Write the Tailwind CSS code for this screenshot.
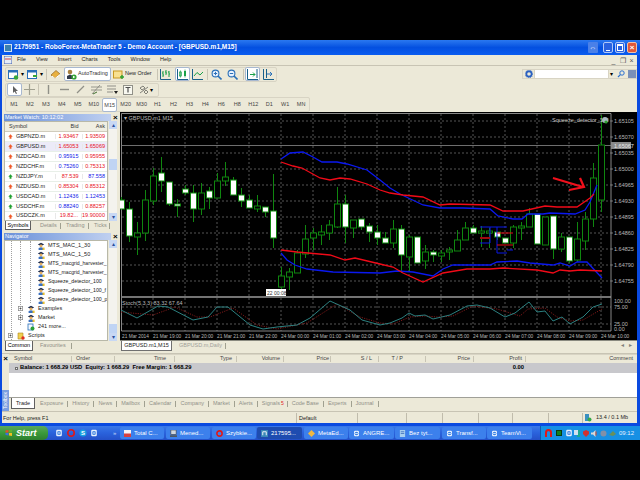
<!DOCTYPE html>
<html lang="en">
<head>
<meta charset="UTF-8">
<title>2175951 - RoboForex-MetaTrader 5</title>
<script src="https://cdn.jsdelivr.net/npm/@tailwindcss/browser@4"></script>
</head>
<body class="bg-black">
<svg class="hidden">
  <symbol id="ea" viewBox="0 0 10 10"><path d="M1 3 5 1l4 2-4 2z" fill="#1c2c50"/><circle cx="5" cy="5" r="1.8" fill="#e8b060"/><path d="M2 10V7.5L5 6.5l3 1V10z" fill="#3a70c0"/><path d="M7 7h2.5v3H7z" fill="#e8c030"/></symbol>
  <symbol id="up" viewBox="0 0 8 8"><path d="M4 .5 7.5 4.2H5.5V7.5h-3V4.2H.5z" fill="currentColor"/></symbol>
  <symbol id="tree-plus" viewBox="0 0 7 7"><rect x=".5" y=".5" width="6" height="6" fill="#fff" stroke="#8a8a8a"/><path d="M2 3.5h3M3.5 2v3" stroke="#222" stroke-width=".8"/></symbol>
  <symbol id="ie" viewBox="0 0 10 10"><rect x="1.5" y="1" width="7" height="8" rx="1.5" fill="#e8f2ff"/><circle cx="5" cy="5" r="2.6" fill="#3a80e0"/><path d="M3 5h4" stroke="#fff"/></symbol>
</svg>

<div class="w-[640px] h-[480px] overflow-hidden bg-black font-['Liberation_Sans',sans-serif] text-[5.5px] leading-none text-[#222] whitespace-nowrap flex flex-col">
  <div class="h-[40px] shrink-0"></div>

  <!-- window -->
  <div class="h-[386px] shrink-0 flex flex-col pl-[2px] pr-[3px] pb-[3px] bg-[#0a4ae0]">
    <!-- title bar -->
    <div class="h-[15px] shrink-0 -ml-[2px] -mr-[3px] flex items-center bg-gradient-to-b from-[#2a78f0] via-[#0450e0] to-[#0a5cf0] text-white">
      <div class="w-[8px] h-[8px] ml-[4px] mr-[1px] bg-[#3a80b0] border border-[#d0e0f0]"></div>
      <span class="text-[6.5px] font-bold ml-[1px]">2175951 - RoboForex-MetaTrader 5 - Demo Account - [GBPUSD.m1,M15]</span>
      <div class="ml-auto flex items-center mr-[3px]">
        <div class="w-[10px] h-[11px] bg-[#4a80e8] text-center text-[7px] leading-[11px] rounded-[1px]">⇔</div>
        <div class="w-[10px] h-[11px] ml-[5px] bg-[#2a62e0] border border-[#b0c8f8] rounded-[2px] flex items-end justify-center pb-[1px]"><div class="w-[4px] h-[1px] bg-white"></div></div>
        <div class="w-[10px] h-[11px] ml-[2px] bg-[#2a62e0] border border-[#b0c8f8] rounded-[2px] p-[1px]"><div class="w-full h-full border border-white border-t-2"></div></div>
        <div class="w-[10px] h-[11px] ml-[2px] bg-[#e0583a] border border-[#f0c0a8] rounded-[2px] text-white text-[8px] leading-[9px] text-center font-bold">×</div>
      </div>
    </div>

    <!-- menu -->
    <div class="h-[11px] shrink-0 flex items-center bg-[#ece9d8] border-b border-[#c8c4b4] text-[#222]">
      <svg class="w-[8px] h-[8px] ml-[2px]" viewBox="0 0 8 8"><rect width="8" height="8" fill="#e8eef8" stroke="#4060b0"/><path d="M1 3h6" stroke="#d04040"/></svg>
      <span class="ml-[5px]">File</span><span class="ml-[10px]">View</span><span class="ml-[10px]">Insert</span><span class="ml-[10px]">Charts</span><span class="ml-[10px]">Tools</span><span class="ml-[10px]">Window</span><span class="ml-[10px]">Help</span>
      <div class="ml-auto flex text-[#555] text-[7px] mr-[1px]"><span class="w-[9px] text-center">_</span><span class="w-[9px] text-center">❐</span><span class="w-[9px] text-center">×</span></div>
    </div>

    <!-- toolbar row 1 -->
    <div class="h-[16px] shrink-0 flex items-center bg-[#ece9d8] pl-[3px]">
      <div class="h-[15px] w-[272px] flex items-center border border-[#d8d4c4] rounded-[2px]">
        <svg class="w-[11px] h-[11px] ml-[2px] shrink-0" viewBox="0 0 11 11"><rect x=".5" y="1.5" width="9" height="8" fill="#fff" stroke="#2a70b8"/><path d="M.5 1.5h9v2h-9z" fill="#2a70b8"/><circle cx="8" cy="8.5" r="2.2" fill="#38a838"/></svg>
        <span class="ml-[1px] w-[5px] text-[6px] text-black text-center">▾</span>
        <svg class="w-[11px] h-[11px] ml-[2px] shrink-0" viewBox="0 0 11 11"><rect x=".5" y="1.5" width="9" height="8" fill="#fff" stroke="#2a70b8"/><path d="M.5 1.5h9v2h-9z" fill="#2a70b8"/><path d="M6 7h4" stroke="#38a838" stroke-width="2"/></svg>
        <span class="ml-[1px] w-[5px] text-[6px] text-black text-center">▾</span>
        <div class="w-px h-[11px] bg-[#c8c4b4] ml-[2px]"></div>
        <svg class="w-[11px] h-[11px] ml-[3px] shrink-0" viewBox="0 0 11 11"><path d="M1 6 6 1.5l4 3.5-5 4.5z" fill="#e8b040" stroke="#906020" stroke-width=".7"/><path d="M2 7l3 2.5 5-4" stroke="#fff" fill="none"/></svg>
        <div class="ml-[3px] w-[47px] h-[14px] shrink-0 flex items-center bg-white border border-[#a8b8d0] rounded-[2px]">
          <svg class="w-[11px] h-[11px] ml-[1px] shrink-0" viewBox="0 0 11 11"><circle cx="4" cy="3" r="2.3" fill="#a88040"/><path d="M1 10V7l3-1.5L7 7v3z" fill="#30384a"/><circle cx="8" cy="8" r="2.6" fill="#30a030"/><path d="M7 6.8 9.4 8 7 9.2z" fill="#fff"/></svg>
          <span class="ml-[1px] text-[#333]">AutoTrading</span>
        </div>
        <svg class="w-[11px] h-[11px] ml-[2px] shrink-0" viewBox="0 0 11 11"><rect x=".5" y="2" width="8.5" height="7" fill="#f8e090" stroke="#c89820"/><path d="M7 8h4M9 6v4" stroke="#30a030" stroke-width="1.4"/></svg>
        <span class="ml-[1px] w-[27px] text-[#222]">New Order</span>
        <div class="w-px h-[11px] bg-[#c8c4b4] ml-[5px]"></div>
        <svg class="w-[11px] h-[11px] ml-[2px] shrink-0" viewBox="0 0 11 11"><path d="M.5 0v10.5H11" stroke="#18608a" fill="none"/><path d="M3 2v6M3 4H2M3 6h1M6 1v5M6 3H5M6 4h1M9 2v6M9 3H8M9 5h1" stroke="#18a048"/></svg>
        <div class="w-[15px] h-[14px] ml-[4px] shrink-0 bg-white border border-[#a8b8d0] rounded-[2px] flex items-center justify-center">
          <svg class="w-[11px] h-[11px]" viewBox="0 0 11 11"><path d="M.5 0v10.5H11" stroke="#18608a" fill="none"/><rect x="2.5" y="3" width="2" height="4" fill="#fff" stroke="#18a048" stroke-width=".7"/><rect x="7" y="2" width="2" height="5" fill="#18a048"/><path d="M3.5 1.5v7M8 .5v8" stroke="#18a048" stroke-width=".7"/></svg>
        </div>
        <svg class="w-[11px] h-[11px] ml-[2px] shrink-0" viewBox="0 0 11 11"><path d="M.5 0v10.5H11" stroke="#18608a" fill="none"/><path d="M2 7 5 3.5 8 6l3-3" stroke="#18a048" fill="none"/></svg>
        <div class="w-px h-[11px] bg-[#c8c4b4] ml-[4px]"></div>
        <svg class="w-[11px] h-[11px] ml-[3px] shrink-0" viewBox="0 0 11 11"><circle cx="4.5" cy="4.5" r="3.4" fill="#e8f2ff" stroke="#2a70b8" stroke-width="1.1"/><path d="M7 7l3.5 3.5" stroke="#2a70b8" stroke-width="1.6"/><path d="M2.8 4.5h3.4M4.5 2.8v3.4" stroke="#2a70b8"/></svg>
        <svg class="w-[11px] h-[11px] ml-[5px] shrink-0" viewBox="0 0 11 11"><circle cx="4.5" cy="4.5" r="3.4" fill="#e8f2ff" stroke="#2a70b8" stroke-width="1.1"/><path d="M7 7l3.5 3.5" stroke="#2a70b8" stroke-width="1.6"/><path d="M2.8 4.5h3.4" stroke="#2a70b8"/></svg>
        <div class="w-px h-[11px] bg-[#c8c4b4] ml-[5px]"></div>
        <div class="w-[15px] h-[14px] ml-[1px] shrink-0 bg-white border border-[#a8b8d0] rounded-[2px] flex items-center justify-center">
          <svg class="w-[11px] h-[11px]" viewBox="0 0 11 11"><path d="M.5 0v10.5H11M10 0v9" stroke="#18608a" fill="none"/><path d="M3 5.5h5M6 3.5l2 2-2 2" stroke="#18a048" fill="none"/></svg>
        </div>
        <svg class="w-[11px] h-[11px] ml-[3px] shrink-0" viewBox="0 0 11 11"><path d="M.5 0v10.5H11M3.5 0v9" stroke="#18608a" fill="none"/><path d="M4 5h5M7 3l2 2-2 2" stroke="#2a70b8" fill="none"/></svg>
      </div>
      <!-- search -->
      <div class="ml-auto h-[10px] w-[115px] flex items-center border border-[#d8d4c4] mt-[-1px]">
        <svg class="w-[8px] h-[8px] ml-[2px] shrink-0" viewBox="0 0 8 8"><circle cx="4" cy="4" r="2.6" fill="none" stroke="#2a60c0" stroke-width="1.6"/><circle cx="4" cy="4" r="3.8" fill="none" stroke="#2a60c0" stroke-dasharray="1 1"/></svg>
        <div class="w-[75px] h-full bg-white ml-[1px] border-x border-[#d8d4c4]"></div>
        <span class="ml-[1px] text-[6px] text-black w-[6px]">▾</span>
        <svg class="w-[8px] h-[8px] ml-[1px] shrink-0" viewBox="0 0 8 8"><circle cx="5" cy="3" r="2.2" fill="none" stroke="#2a70d0"/><path d="M3.4 4.6 1 7" stroke="#2a70d0" stroke-width="1.2"/></svg>
        <div class="w-[8px] h-[8px] ml-[3px] bg-[#7a90b8]"></div>
      </div>
    </div>

    <!-- toolbar row 2 -->
    <div class="h-[15px] shrink-0 flex items-center bg-[#ece9d8] pl-[3px]">
      <div class="h-[14px] w-[154px] flex items-center border border-[#d8d4c4] rounded-[2px]">
        <div class="w-[15px] h-[13px] ml-[1px] shrink-0 bg-white border border-[#a8b8d0] rounded-[2px] flex items-center justify-center">
          <svg class="w-[8px] h-[8px]" viewBox="0 0 8 8"><path d="M2 0v7l1.6-1.6L5 8l1-.6-1.3-2.4H7z" fill="#606060"/></svg>
        </div>
        <svg class="w-[11px] h-[11px] ml-[2px] shrink-0" viewBox="0 0 11 11"><path d="M5.5 0v11M0 5.5h11" stroke="#a0a090" stroke-width="1.2"/></svg>
        <div class="w-px h-[11px] bg-[#c8c4b4] ml-[3px]"></div>
        <svg class="w-[9px] h-[9px] ml-[5px] shrink-0" viewBox="0 0 9 9"><path d="M4.5 0v9" stroke="#909088" stroke-width="1.4"/></svg>
        <svg class="w-[9px] h-[9px] ml-[7px] shrink-0" viewBox="0 0 9 9"><path d="M0 4.5h9" stroke="#909088" stroke-width="1.4"/></svg>
        <svg class="w-[9px] h-[9px] ml-[7px] shrink-0" viewBox="0 0 9 9"><path d="M1 8 8 1" stroke="#909088" stroke-width="1.2"/></svg>
        <svg class="w-[11px] h-[11px] ml-[6px] shrink-0" viewBox="0 0 11 11"><path d="M1 10 9 1M0 3h11M0 6h11" stroke="#808078" stroke-width=".8"/><path d="M2 10 6 8" stroke="#407030"/></svg>
        <svg class="w-[11px] h-[11px] ml-[5px] shrink-0" viewBox="0 0 11 11"><path d="M0 2h9M0 5h9M0 8h6" stroke="#909088" stroke-width="1.2"/><path d="M7 7h4l-2 3z" fill="#222"/></svg>
        <svg class="w-[10px] h-[10px] ml-[5px] shrink-0" viewBox="0 0 10 10"><rect x=".5" y=".5" width="9" height="9" fill="#f8f8f0" stroke="#909088"/><path d="M2.5 2.5h5M5 2.5v5" stroke="#505050" stroke-width="1.2"/></svg>
        <svg class="w-[10px] h-[10px] ml-[6px] shrink-0" viewBox="0 0 10 10"><path d="M1 3 4 1l2 2-3 2zM5 7l2-2 2 2-2 2zM1 8 9 2" stroke="#808078" fill="none"/></svg>
        <span class="ml-[1px] text-[6px] text-black">▾</span>
      </div>
    </div>

    <!-- toolbar row 3, periods -->
    <div class="h-[15px] shrink-0 flex items-center bg-[#ece9d8] pl-[3px]">
      <div class="h-[15px] w-[305px] flex items-center border border-[#d8d4c4] rounded-[2px] text-[#444] text-center">
        <span class="w-[16px]">M1</span><span class="w-[16px]">M2</span><span class="w-[16px]">M3</span><span class="w-[16px]">M4</span><span class="w-[16px]">M5</span><span class="w-[16px]">M10</span>
        <span class="w-[15px] h-[14px] mx-[.5px] bg-white border border-[#a8b8d0] rounded-[2px] leading-[12px]">M15</span>
        <span class="w-[16px]">M20</span><span class="w-[16px]">M30</span><span class="w-[16px]">H1</span><span class="w-[16px]">H2</span><span class="w-[16px]">H3</span><span class="w-[16px]">H4</span><span class="w-[16px]">H6</span><span class="w-[16px]">H8</span><span class="w-[16px]">H12</span><span class="w-[16px]">D1</span><span class="w-[16px]">W1</span><span class="w-[16px]">MN</span>
      </div>
    </div>

    <!-- middle -->
    <div class="h-[241px] shrink-0 flex bg-[#ece9d8]">
      <!-- left column -->
      <div class="w-[116px] shrink-0 flex flex-col">
        <!-- market watch -->
        <div class="h-[119px] flex flex-col pt-[2px]">
          <div class="h-[7px] shrink-0 flex items-center">
            <div class="ml-[2px] w-[107px] h-full bg-gradient-to-r from-[#6a90d8] to-[#c0d0f0] text-white pl-[1px] leading-[7px]">Market Watch: 10:12:02</div>
            <span class="ml-[2px] text-[8px] text-black font-bold">×</span>
          </div>
          <div class="flex ml-[2px] h-[100px]">
            <div class="w-[104px] bg-white border border-[#b8b8a8] text-right">
              <div class="h-[10px] flex items-center bg-[#f0eee2] text-[#333] border-b border-[#d0ccbc]">
                <span class="w-[51px] text-left pl-[4px]">Symbol</span><span class="w-[27px] pr-[3px]">Bid</span><span class="w-[26px] pr-[2px]">Ask</span>
              </div>
              <div class="h-[10px] flex items-center border-b border-[#e8efe8]"><span class="w-[51px] flex items-center text-left pl-[3px]"><svg class="w-[5px] h-[5px] shrink-0 text-[#f05a28]"><use href="#up"/></svg><span class="ml-[3px]">GBPNZD.m</span></span><span class="w-[27px] pr-[3px] text-[#e8101c] border-l border-[#e8e8e8]">1.93467</span><span class="w-[26px] pr-[2px] text-[#e8101c] border-l border-[#e8e8e8]">1.93509</span></div>
              <div class="h-[10px] flex items-center border-b border-[#e8efe8] bg-[#ecebf8]"><span class="w-[51px] flex items-center text-left pl-[3px]"><svg class="w-[5px] h-[5px] shrink-0 text-[#f05a28]"><use href="#up"/></svg><span class="ml-[3px]">GBPUSD.m</span></span><span class="w-[27px] pr-[3px] text-[#e8101c] border-l border-[#e8e8e8]">1.65053</span><span class="w-[26px] pr-[2px] text-[#e8101c] border-l border-[#e8e8e8]">1.65069</span></div>
              <div class="h-[10px] flex items-center border-b border-[#e8efe8]"><span class="w-[51px] flex items-center text-left pl-[3px]"><svg class="w-[5px] h-[5px] shrink-0 text-[#f05a28]"><use href="#up"/></svg><span class="ml-[3px]">NZDCAD.m</span></span><span class="w-[27px] pr-[3px] text-[#1020e8] border-l border-[#e8e8e8]">0.95915</span><span class="w-[26px] pr-[2px] text-[#e8101c] border-l border-[#e8e8e8]">0.95955</span></div>
              <div class="h-[10px] flex items-center border-b border-[#e8efe8]"><span class="w-[51px] flex items-center text-left pl-[3px]"><svg class="w-[5px] h-[5px] shrink-0 text-[#f05a28]"><use href="#up"/></svg><span class="ml-[3px]">NZDCHF.m</span></span><span class="w-[27px] pr-[3px] text-[#1020e8] border-l border-[#e8e8e8]">0.75260</span><span class="w-[26px] pr-[2px] text-[#e8101c] border-l border-[#e8e8e8]">0.75313</span></div>
              <div class="h-[10px] flex items-center border-b border-[#e8efe8]"><span class="w-[51px] flex items-center text-left pl-[3px]"><svg class="w-[5px] h-[5px] shrink-0 text-[#20a030]"><use href="#up"/></svg><span class="ml-[3px]">NZDJPY.m</span></span><span class="w-[27px] pr-[3px] text-[#e8101c] border-l border-[#e8e8e8]">87.539</span><span class="w-[26px] pr-[2px] text-[#1020e8] border-l border-[#e8e8e8]">87.558</span></div>
              <div class="h-[10px] flex items-center border-b border-[#e8efe8]"><span class="w-[51px] flex items-center text-left pl-[3px]"><svg class="w-[5px] h-[5px] shrink-0 text-[#f05a28]"><use href="#up"/></svg><span class="ml-[3px]">NZDUSD.m</span></span><span class="w-[27px] pr-[3px] text-[#e8101c] border-l border-[#e8e8e8]">0.85304</span><span class="w-[26px] pr-[2px] text-[#e8101c] border-l border-[#e8e8e8]">0.85312</span></div>
              <div class="h-[10px] flex items-center border-b border-[#e8efe8]"><span class="w-[51px] flex items-center text-left pl-[3px]"><svg class="w-[5px] h-[5px] shrink-0 text-[#20a030]"><use href="#up"/></svg><span class="ml-[3px]">USDCAD.m</span></span><span class="w-[27px] pr-[3px] text-[#1020e8] border-l border-[#e8e8e8]">1.12436</span><span class="w-[26px] pr-[2px] text-[#1020e8] border-l border-[#e8e8e8]">1.12453</span></div>
              <div class="h-[10px] flex items-center border-b border-[#e8efe8]"><span class="w-[51px] flex items-center text-left pl-[3px]"><svg class="w-[5px] h-[5px] shrink-0 text-[#20a030]"><use href="#up"/></svg><span class="ml-[3px]">USDCHF.m</span></span><span class="w-[27px] pr-[3px] text-[#1020e8] border-l border-[#e8e8e8]">0.88240</span><span class="w-[26px] pr-[2px] text-[#e8101c] border-l border-[#e8e8e8]">0.88257</span></div>
              <div class="h-[8px] flex items-center overflow-hidden"><span class="w-[51px] flex items-center text-left pl-[3px]"><svg class="w-[5px] h-[5px] shrink-0 text-[#f05a28]"><use href="#up"/></svg><span class="ml-[3px]">USDCZK.m</span></span><span class="w-[27px] pr-[3px] text-[#e8101c] border-l border-[#e8e8e8]">19.82...</span><span class="w-[26px] pr-[2px] text-[#e8101c] border-l border-[#e8e8e8]">19.90000</span></div>
            </div>
            <!-- scrollbar -->
            <div class="w-[8px] ml-[1px] bg-[#f4f3ee] flex flex-col items-center">
              <div class="w-[8px] h-[8px] bg-[#c8d8f4] text-[#2a50a0] text-[6px] leading-[8px] text-center">▴</div>
              <div class="w-[8px] h-[11px] mt-[30px] bg-[#c0d4f4]"></div>
              <div class="w-[8px] h-[8px] mt-auto bg-[#c8d8f4] text-[#2a50a0] text-[6px] leading-[8px] text-center">▾</div>
            </div>
          </div>
          <!-- tabs -->
          <div class="h-[9px] flex items-center ml-[3px] text-[#909088]">
            <span class="w-[26px] h-[9px] bg-white border-x border-b border-[#606060] text-black text-center leading-[8px]">Symbols</span>
            <span class="ml-[9px] w-[20px]">Details</span><span class="w-px h-[6px] bg-[#a0a090]"></span>
            <span class="ml-[5px] w-[22px]">Trading</span><span class="w-px h-[6px] bg-[#a0a090]"></span>
            <span class="ml-[5px] w-[15px]">Ticks</span><span class="w-px h-[6px] bg-[#a0a090]"></span>
          </div>
        </div>

        <!-- navigator -->
        <div class="h-[122px] flex flex-col pt-[2px]">
          <div class="h-[7px] shrink-0 flex items-center">
            <div class="ml-[2px] w-[107px] h-full bg-gradient-to-r from-[#6a90d8] to-[#c0d0f0] text-white pl-[1px] leading-[7px]">Navigator</div>
            <span class="ml-[2px] text-[8px] text-black font-bold">×</span>
          </div>
          <div class="flex ml-[2px] h-[101px]">
            <div class="relative w-[104px] bg-white border border-[#b8b8a8] text-[#222] overflow-hidden">
              <div class="absolute left-[6px] top-0 h-full border-l border-dotted border-[#a0a0a0]"></div>
              <div class="absolute left-[15px] top-0 h-[84px] border-l border-dotted border-[#a0a0a0]"></div>
              <div class="absolute left-[25px] top-0 h-[62px] border-l border-dotted border-[#a0a0a0]"></div>
              <div class="h-[9px] flex items-center pl-[32px]"><svg class="w-[8px] h-[8px] shrink-0"><use href="#ea"/></svg><span class="ml-[3px]">MTS_MAC_1_30</span></div>
              <div class="h-[9px] flex items-center pl-[32px]"><svg class="w-[8px] h-[8px] shrink-0"><use href="#ea"/></svg><span class="ml-[3px]">MTS_MAC_1_50</span></div>
              <div class="h-[9px] flex items-center pl-[32px]"><svg class="w-[8px] h-[8px] shrink-0"><use href="#ea"/></svg><span class="ml-[3px] text-[5.1px]">MTS_macgrid_harvester_</span></div>
              <div class="h-[9px] flex items-center pl-[32px]"><svg class="w-[8px] h-[8px] shrink-0"><use href="#ea"/></svg><span class="ml-[3px] text-[5.1px]">MTS_macgrid_harvester_</span></div>
              <div class="h-[9px] flex items-center pl-[32px]"><svg class="w-[8px] h-[8px] shrink-0"><use href="#ea"/></svg><span class="ml-[3px] text-[5.2px]">Squeeze_detector_100</span></div>
              <div class="h-[9px] flex items-center pl-[32px]"><svg class="w-[8px] h-[8px] shrink-0"><use href="#ea"/></svg><span class="ml-[3px] text-[5.2px]">Squeeze_detector_100_f</span></div>
              <div class="h-[9px] flex items-center pl-[32px]"><svg class="w-[8px] h-[8px] shrink-0"><use href="#ea"/></svg><span class="ml-[3px] text-[5.2px]">Squeeze_detector_100_p</span></div>
              <div class="h-[9px] flex items-center pl-[13px] relative"><svg class="w-[5px] h-[5px] shrink-0"><use href="#tree-plus"/></svg><svg class="w-[8px] h-[8px] ml-[4px] shrink-0"><use href="#ea"/></svg><span class="ml-[3px]">Examples</span></div>
              <div class="h-[9px] flex items-center pl-[13px] relative"><svg class="w-[5px] h-[5px] shrink-0"><use href="#tree-plus"/></svg><svg class="w-[8px] h-[8px] ml-[4px] shrink-0"><use href="#ea"/></svg><span class="ml-[3px]">Market</span></div>
              <div class="h-[9px] flex items-center pl-[22px]"><svg class="w-[8px] h-[8px] shrink-0" viewBox="0 0 8 8"><rect x="1" y="1" width="5" height="6" fill="#f4f8ff" stroke="#2a70b8" stroke-width=".8"/><circle cx="5.5" cy="5.5" r="2" fill="#28a038"/></svg><span class="ml-[3px]">241 more...</span></div>
              <div class="h-[9px] flex items-center pl-[3px] relative"><svg class="w-[5px] h-[5px] shrink-0"><use href="#tree-plus"/></svg><svg class="w-[8px] h-[8px] ml-[4px] shrink-0" viewBox="0 0 8 8"><path d="M1 1h5v6H1z" fill="#f0d050" stroke="#b08820" stroke-width=".6"/><circle cx="6" cy="6" r="1.7" fill="#e03020"/></svg><span class="ml-[3px]">Scripts</span></div>
            </div>
            <div class="w-[8px] ml-[1px] bg-[#f4f3ee] flex flex-col items-center">
              <div class="w-[8px] h-[8px] bg-[#c8d8f4] text-[#2a50a0] text-[6px] leading-[8px] text-center">▴</div>
              <div class="w-[8px] h-[9px] mt-auto bg-[#c0d4f4]"></div>
              <div class="w-[8px] h-[8px] bg-[#c8d8f4] text-[#2a50a0] text-[6px] leading-[8px] text-center">▾</div>
            </div>
          </div>
          <div class="h-[10px] flex items-center ml-[3px] text-[#909088]">
            <span class="w-[28px] h-[10px] bg-white border-x border-b border-[#606060] text-black text-center leading-[9px]">Common</span>
            <span class="ml-[7px] w-[31px]">Favourites</span><span class="w-px h-[6px] bg-[#a0a090]"></span>
          </div>
        </div>
      </div>

      <!-- chart column -->
      <div class="w-[519px] shrink-0 flex flex-col pl-[2px]">
        <svg id="chart" class="block w-[517px] h-[228px] shrink-0 bg-black" viewBox="120 112 517 228" font-family="Liberation Sans, sans-serif" font-size="5.5"></svg>
        <div class="h-[11px] flex items-center text-[#a0a098] border-t border-[#8a8a80]">
          <span class="w-[51px] h-[10px] ml-[1px] bg-white border-x border-b border-[#707070] text-[#222] text-center leading-[9px]">GBPUSD.m1,M15</span>
          <span class="ml-[7px]">GBPUSD.m,Daily</span>
          <span class="w-px h-[6px] bg-[#a0a090] ml-[3px]"></span>
          <span class="ml-auto mr-[5px] text-[#808078]">◂&nbsp;&nbsp;&nbsp;▸</span>
        </div>
      </div>
    </div>

    <!-- toolbox -->
    <div class="h-[58px] shrink-0 flex bg-[#ece9d8] border-t border-[#c8c4b4]">
      <div class="w-[7px] shrink-0 flex flex-col items-center">
        <span class="text-[8px] font-bold text-black mt-[1px]">×</span>
        <div class="mt-auto w-full h-[21px] bg-[#7a9ee0] flex items-center justify-center"><span class="block -rotate-90 text-white text-[5px]">Toolbox</span></div>
      </div>
      <div class="grow flex flex-col min-w-0">
        <div class="h-[9px] shrink-0 flex items-center text-[#444] border-t border-[#d8d4c4]">
          <span class="w-[63px] pl-[5px] border-r border-[#c8c4b4]">Symbol</span>
          <span class="w-[43px] pl-[4px] border-r border-[#c8c4b4]">Order</span>
          <span class="w-[60px] pr-[8px] text-right border-r border-[#c8c4b4]">Time</span>
          <span class="w-[62px] pr-[4px] text-right border-r border-[#c8c4b4]">Type</span>
          <span class="w-[47px] pr-[3px] text-right border-r border-[#c8c4b4]">Volume</span>
          <span class="w-[47px] pr-[1px] text-right border-r border-[#c8c4b4]">Price</span>
          <span class="w-[48px] pr-[6px] text-right border-r border-[#c8c4b4]">S / L</span>
          <span class="w-[47px] pr-[22px] text-right border-r border-[#c8c4b4]">T / P</span>
          <span class="w-[48px] pr-[3px] text-right border-r border-[#c8c4b4]">Price</span>
          <span class="w-[52px] pr-[3px] text-right border-r border-[#c8c4b4]">Profit</span>
          <span class="grow pr-[4px] text-right">Comment</span>
        </div>
        <div class="h-[10px] shrink-0 flex items-center bg-[#c8c8cc] font-bold text-[5.8px] text-black whitespace-pre">
          <span class="w-[3px] h-[3px] ml-[6px] border border-[#707070] bg-[#eee]"></span>
          <span class="ml-[2px]">Balance: 1 668.29 USD  Equity: 1 668.29  Free Margin: 1 668.29</span>
          <span class="ml-auto mr-[113px]">0.00</span>
        </div>
        <div class="h-[25px] shrink-0 bg-white border-b border-[#a0a098]"></div>
        <!-- tabs -->
        <div class="h-[11px] shrink-0 flex items-center text-[#909088]">
          <span class="w-[24px] h-[11px] ml-[2px] bg-white border-x border-b border-[#606060] text-[#222] text-center leading-[10px]">Trade</span>
          <span class="ml-[5px]">Exposure</span><span class="w-px h-[6px] bg-[#a0a090] ml-[4px]"></span>
          <span class="ml-[4px]">History</span><span class="w-px h-[6px] bg-[#a0a090] ml-[4px]"></span>
          <span class="ml-[4px]">News</span><span class="w-px h-[6px] bg-[#a0a090] ml-[4px]"></span>
          <span class="ml-[4px]">Mailbox</span><span class="w-px h-[6px] bg-[#a0a090] ml-[4px]"></span>
          <span class="ml-[4px]">Calendar</span><span class="w-px h-[6px] bg-[#a0a090] ml-[4px]"></span>
          <span class="ml-[4px]">Company</span><span class="w-px h-[6px] bg-[#a0a090] ml-[4px]"></span>
          <span class="ml-[4px]">Market</span><span class="w-px h-[6px] bg-[#a0a090] ml-[4px]"></span>
          <span class="ml-[4px]">Alerts</span><span class="w-px h-[6px] bg-[#a0a090] ml-[4px]"></span>
          <span class="ml-[4px]">Signals</span><span class="ml-[1px] text-[#e02020] text-[5px]">5</span><span class="w-px h-[6px] bg-[#a0a090] ml-[3px]"></span>
          <span class="ml-[4px]">Code Base</span><span class="w-px h-[6px] bg-[#a0a090] ml-[4px]"></span>
          <span class="ml-[4px]">Experts</span><span class="w-px h-[6px] bg-[#a0a090] ml-[4px]"></span>
          <span class="ml-[4px]">Journal</span><span class="w-px h-[6px] bg-[#a0a090] ml-[4px]"></span>
        </div>
      </div>
    </div>

    <!-- status bar -->
    <div class="h-[12px] shrink-0 flex items-center bg-[#ece9d8] border-t border-[#c8c4b4] text-[#222]">
      <span class="w-[295px] pl-[1px] border-r border-[#c0bcac] leading-[10px]">For Help, press F1</span>
      <span class="w-[61px] pl-[2px] border-r border-[#c0bcac] leading-[10px]">Default</span>
      <span class="w-[49px] h-[10px] border-r border-[#c0bcac]"></span>
      <span class="w-[36px] h-[10px] border-r border-[#c0bcac]"></span>
      <span class="w-[36px] h-[10px] border-r border-[#c0bcac]"></span>
      <span class="w-[34px] h-[10px] border-r border-[#c0bcac]"></span>
      <span class="w-[36px] h-[10px] border-r border-[#c0bcac]"></span>
      <span class="w-[34px] h-[10px] border-r border-[#c0bcac]"></span>
      <svg class="w-[8px] h-[8px] ml-[1px] shrink-0" viewBox="0 0 8 8"><rect x="1" y="0" width="4" height="7" fill="#3a90c0"/><circle cx="5.5" cy="5.5" r="2" fill="#38a848"/></svg>
      <span class="ml-[4px]">13.4 / 0.1 Mb</span>
    </div>
  </div>

  <!-- taskbar -->
  <div class="h-[14px] shrink-0 flex items-center bg-gradient-to-b from-[#3a78e8] via-[#2a62dc] to-[#2450c8] text-white text-[6px]">
    <div class="w-[48px] h-full flex items-center bg-gradient-to-b from-[#5aa85a] via-[#3a9a3a] to-[#2e7e2e] rounded-r-[5px]">
      <svg class="w-[8px] h-[8px] ml-[5px]" viewBox="0 0 8 8"><path d="M.5 1.5 3.5 1v2.5h-3z" fill="#e84c28"/><path d="M4 1l3-.5v3H4z" fill="#60b030"/><path d="M.5 4h3v2.5l-3-.5z" fill="#3a70e0"/><path d="M4 4h3v3l-3-.5z" fill="#f0c020"/></svg>
      <span class="ml-[3px] text-[9px] italic font-bold">Start</span>
    </div>
    <svg class="w-[8px] h-[8px] ml-[7px] shrink-0"><use href="#ie"/></svg>
    <svg class="w-[8px] h-[8px] ml-[4px] shrink-0" viewBox="0 0 8 8"><circle cx="4" cy="4" r="3.2" fill="none" stroke="#e01818" stroke-width="1.6"/></svg>
    <svg class="w-[8px] h-[8px] ml-[4px] shrink-0" viewBox="0 0 8 8"><circle cx="4" cy="4" r="3.6" fill="#18a0e0"/><text x="4" y="6" font-size="6" fill="#fff" text-anchor="middle" font-weight="bold">S</text></svg>
    <svg class="w-[8px] h-[8px] ml-[3px] shrink-0"><use href="#ie"/></svg>
    <span class="ml-[15px] text-[#c8d8f8] text-[6px] w-[7px]">»</span>

    <div class="w-[44px] h-[12px] flex items-center pl-[4px] bg-[#3c80ec] rounded-[2px] overflow-hidden"><svg class="w-[7px] h-[7px] shrink-0" viewBox="0 0 8 8"><rect width="8" height="8" fill="#f4f4f8"/><rect y="4" width="8" height="4" fill="#d84040"/></svg><span class="ml-[3px]">Total C...</span></div>
    <div class="w-[44px] h-[12px] ml-[2px] flex items-center pl-[4px] bg-[#3c80ec] rounded-[2px] overflow-hidden"><svg class="w-[7px] h-[7px] shrink-0" viewBox="0 0 8 8"><rect x="1" width="6" height="5" fill="#d0d8e0" stroke="#404040" stroke-width=".7"/><rect y="6" width="8" height="2" fill="#505860"/></svg><span class="ml-[3px]">Mened...</span></div>
    <div class="w-[44px] h-[12px] ml-[2px] flex items-center pl-[4px] bg-[#3c80ec] rounded-[2px] overflow-hidden"><svg class="w-[7px] h-[7px] shrink-0" viewBox="0 0 8 8"><circle cx="4" cy="4" r="3" fill="none" stroke="#e01818" stroke-width="1.8"/></svg><span class="ml-[3px]">Szybkie...</span></div>
    <div class="w-[45px] h-[12px] ml-[1px] flex items-center pl-[4px] bg-[#1e4cb0] rounded-[2px] overflow-hidden"><svg class="w-[7px] h-[7px] shrink-0" viewBox="0 0 8 8"><rect width="8" height="8" fill="#3a88b8"/><path d="M2 6V2h4v4" stroke="#fff" fill="none"/></svg><span class="ml-[3px]">217595...</span></div>
    <div class="w-[44px] h-[12px] ml-[2px] flex items-center pl-[4px] bg-[#3c80ec] rounded-[2px] overflow-hidden"><svg class="w-[7px] h-[7px] shrink-0" viewBox="0 0 8 8"><path d="M4 0 8 4 4 8 0 4z" fill="#f0b840"/></svg><span class="ml-[3px]">MetaEd...</span></div>
    <div class="w-[45px] h-[12px] ml-[1px] flex items-center pl-[4px] bg-[#3c80ec] rounded-[2px] overflow-hidden"><svg class="w-[7px] h-[7px] shrink-0"><use href="#ie"/></svg><span class="ml-[3px]">ANGRE...</span></div>
    <div class="w-[45px] h-[12px] ml-[1px] flex items-center pl-[4px] bg-[#3c80ec] rounded-[2px] overflow-hidden"><svg class="w-[7px] h-[7px] shrink-0" viewBox="0 0 8 8"><rect x="1" width="6" height="8" fill="#a8d0f0"/><path d="M2 2h4M2 4h4" stroke="#4878c0"/></svg><span class="ml-[3px]">Bez tyt...</span></div>
    <div class="w-[44px] h-[12px] ml-[2px] flex items-center pl-[4px] bg-[#3c80ec] rounded-[2px] overflow-hidden"><svg class="w-[7px] h-[7px] shrink-0"><use href="#ie"/></svg><span class="ml-[3px]">Transf...</span></div>
    <div class="w-[45px] h-[12px] ml-[1px] flex items-center pl-[4px] bg-[#3c80ec] rounded-[2px] overflow-hidden"><svg class="w-[7px] h-[7px] shrink-0"><use href="#ie"/></svg><span class="ml-[3px]">TeamVi...</span></div>

    <!-- tray -->
    <div class="ml-auto w-[100px] h-full flex items-center bg-[#1690e4] border-l border-[#0c5cb0] pl-[4px]">
      <svg class="w-[7px] h-[8px] shrink-0" viewBox="0 0 7 8"><path d="M3.5 0a3.5 3.5 0 0 1 3.5 3.5V8H5V3.5a1.5 1.5 0 0 0-3 0V8H0V3.5A3.5 3.5 0 0 1 3.5 0z" fill="#e01818"/></svg>
      <div class="w-[6px] h-[6px] ml-[4px] bg-[#108020] border border-[#0a3a10]"></div>
      <svg class="w-[8px] h-[8px] ml-[3px] shrink-0"><use href="#ie"/></svg>
      <svg class="w-[6px] h-[7px] ml-[1px] shrink-0" viewBox="0 0 6 7"><rect width="4" height="5" fill="#d0e0f0"/><path d="M3 6h3M5 0v5" stroke="#20c040"/></svg>
      <svg class="w-[6px] h-[7px] ml-[3px] shrink-0" viewBox="0 0 6 7"><path d="M3 0 6 1.5V4L3 7 0 4V1.5z" fill="#d03030"/></svg>
      <svg class="w-[7px] h-[7px] ml-[2px] shrink-0" viewBox="0 0 7 7"><path d="M0 2.5h2L4.5 0v7L2 4.5H0z" fill="#d8d8d8"/><path d="M5 1.5v4" stroke="#e04020"/></svg>
      <svg class="w-[7px] h-[7px] ml-[2px] shrink-0" viewBox="0 0 7 7"><circle cx="3.5" cy="3.5" r="3" fill="#8090a8"/></svg>
      <svg class="w-[7px] h-[7px] ml-[2px] shrink-0" viewBox="0 0 7 7"><path d="M0 5 4 1l3 3-3 2z" fill="#68905a"/></svg>
      <span class="ml-[3px] text-[#e8f2ff]">09:12</span>
    </div>
  </div>
  <div class="grow"></div>
</div>

<script>
  // x = 121 + 8 * index; [top, bottom, wickTop, wickBottom, white]
  const candles = [
    [200,209,197,209,1],[209,236,202,242,1],[233,237,222,255,0],[200,233,190,241,0],[176,201,168,205,0],
    [173,181,157,192,1],[182,204,182,206,1],[204,206,199,217,1],[189,193,185,195,1],[193,209,185,222,1],
    [193,209,183,215,0],[191,198,187,209,1],[181,198,173,198,0],[177,181,162,186,0],[180,195,177,195,1],
    [195,201,188,207,1],[200,208,195,208,1],[206,209,195,212,0],[207,212,207,217,1],[211,238,174,248,1],
    [276,287,267,290,0],[272,277,268,290,0],[253,273,250,273,0],[239,254,225,258,0],[233,238,228,250,0],
    [232,235,225,245,0],[225,233,220,240,0],[204,227,187,228,0],[204,227,195,243,1],[220,228,220,238,0],
    [219,227,219,230,1],[226,232,223,242,1],[232,238,225,245,1],[238,243,232,243,1],[229,243,220,248,0],
    [229,255,225,273,1],[237,257,235,272,0],[237,263,237,263,1],[252,261,245,269,0],[252,255,250,262,1],
    [253,256,250,262,0],[250,252,247,260,0],[240,251,230,251,0],[228,240,222,240,0],[228,233,225,233,1],
    [231,233,226,247,0],[231,233,228,248,0],[232,237,232,240,1],[238,243,238,243,1],[227,243,225,248,0],
    [226,228,222,240,0],[214,227,208,227,0],[214,244,214,244,1],[217,245,217,245,0],[216,249,216,259,1],
    [237,249,233,252,0],[237,261,237,263,1],[239,260,222,262,0],[219,241,212,250,0],[178,219,163,227,0],
    [145,200,115,212,0]
  ];
  const bbUpperBlue = "281,159 290,153 303,152 313,157 322,162 337,162 347,164 367,170 380,180 390,188 400,194 423,205 440,208 463,208 490,209 498,216 513,219 522,219 528,214 543,214 550,213 575,214 585,210 590,202 597,185";
  const bbUpperRed = "281,162 293,166 302,168 320,178 330,180 340,178 350,179 367,184 380,190 390,193 403,195 423,197 440,205 450,204 490,205 503,211 523,211 545,206 557,207 577,207 590,198 594,194";
  const bbLowerRed = "281,250 297,252 330,255 345,260 355,258 380,264 393,267 403,273 423,282 443,273 467,269 490,269 503,268 537,270 553,273 560,270 570,271 580,270 602,271";
  const bbLowerBlue = "281,253 287,260 295,265 307,269 333,272 380,273 397,271 413,272 433,276 443,269 453,265 490,265 497,262 517,261 530,263 553,265 560,263 570,266 577,262 587,262 602,278";
  const stochMain = "121,310 137,318 158,306 168,307 193,320 208,317 217,307 228,307 250,325 263,329 277,327 297,325 310,318 330,301 350,310 362,320 380,325 390,323 402,318 409,313 415,316 425,315 433,319 450,315 467,306 477,305 490,308 505,317 515,313 529,302 537,312 545,311 553,321 562,317 570,324 583,317 593,307 602,304";
  const stochSig = "121,312 153,315 175,307 197,317 210,317 233,308 257,325 277,329 307,323 337,304 360,317 380,323 393,324 410,317 425,316 437,317 453,316 473,306 497,309 520,316 528,309 545,308 557,317 570,321 583,320 602,309";

  let s = "";
  // grid
  for (let k = 0; k <= 10; k++) {
    const y = 121 + 16 * k;
    s += `<path d="M122 ${y}H611" stroke="#7a7a7a" stroke-width=".7" stroke-dasharray="2 2"/><path d="M611 ${y}h2" stroke="#a8a8a8" stroke-width=".7"/>`;
  }
  for (const y of [307, 324]) s += `<path d="M122 ${y}H611" stroke="#7a7a7a" stroke-width=".7" stroke-dasharray="2 2"/>`;
  for (let x = 153; x <= 601; x += 32) {
    s += `<path d="M${x} 114V331" stroke="#7a7a7a" stroke-width=".7" stroke-dasharray="2 2"/>`;
  }
  // frame
  s += `<path d="M121.5 331V113.5H611V331H121.5" fill="none" stroke="#a8a8a8" stroke-width=".8"/>`;
  s += `<path d="M122 297H611" stroke="#9a9a9a" stroke-width="1.6"/>`;
  s += `<path d="M122 145.5H611" stroke="#8a8a8a" stroke-width=".8"/>`;

  // candles
  candles.forEach((c, i) => {
    const x = 121 + 8 * i;
    s += `<path d="M${x + .5} ${c[2]}V${c[3]}" stroke="#0f860f"/>`;
    s += `<rect x="${x - 2.5}" y="${c[0]}" width="6" height="${c[1] - c[0]}" fill="${c[4] ? "#fff" : "#000"}" stroke="#0f860f"/>`;
  });

  // squeeze leftovers in the middle
  s += `<path d="M480 227H507M490 227V243H480M497 227V253H507M507 250H513" fill="none" stroke="#0a18e8"/>`;
  s += `<path d="M497 233H513M497 245H513" fill="none" stroke="#e80a14"/><path d="M480 238H490" stroke="#a00a10" stroke-width="2"/>`;

  // bands
  for (const [pts, col] of [[bbUpperBlue, "#0a18f0"], [bbUpperRed, "#f00a18"], [bbLowerBlue, "#0a18f0"], [bbLowerRed, "#f00a18"]]) {
    s += `<polyline points="${pts}" fill="none" stroke="${col}" stroke-width="1.3"/>`;
  }

  // hand drawn arrow
  s += `<path d="M553 178 583 187M580 178 584 187 569 190" fill="none" stroke="#f0101c" stroke-width="2.2"/>`;

  // stochastic
  s += `<polyline points="${stochSig}" fill="none" stroke="#8a1c1c" stroke-width=".9" stroke-dasharray="1.2 1.2"/>`;
  s += `<polyline points="${stochMain}" fill="none" stroke="#2c8080" stroke-width="1"/>`;

  // labels
  const text = (x, y, t, fill, extra) => `<text x="${x}" y="${y}" fill="${fill || "#b8b8b8"}" ${extra || ""}>${t}</text>`;
  s += text(124, 120, "▾ GBPUSD.m1,M15");
  s += text(552, 122, "Squeeze_detector_100", "#c8c8c8");
  s += `<circle cx="605" cy="120" r="3" fill="#a8b8c0"/><circle cx="606" cy="122" r="1.6" fill="#30a030"/>`;
  s += text(122, 305, "Stoch(5,3,3) 83.32 67.64");
  [["1.65105",123],["1.65070",139],["1.65035",155],["1.65000",171],["1.64965",187],["1.64930",203],["1.64895",219],["1.64860",235],["1.64825",251],["1.64790",267],["1.64755",283]]
    .forEach(([p, y]) => { s += text(614, y, p); });
  s += `<rect x="611" y="142" width="20" height="7" fill="#8a8a8a"/>` + text(614, 147.5, "1.65067", "#e8e8e8");
  [["100.00",303],["75.00",309],["25.00",326],["0.00",331]].forEach(([p, y]) => { s += text(614, y, p); });
  const times = ["21 Mar 2014","21 Mar 19:00","21 Mar 20:00","21 Mar 21:00","21 Mar 22:00","24 Mar 00:00","24 Mar 01:00","24 Mar 02:00","24 Mar 03:00","24 Mar 04:00","24 Mar 05:00","24 Mar 06:00","24 Mar 07:00","24 Mar 08:00","24 Mar 09:00","24 Mar 10:00"];
  times.forEach((t, i) => { s += text(i === 0 ? 122 : 153 + 32 * (i - 1), 338, t, "#b8b8b8", 'font-size="4.8"'); });
  // tags on the period separator
  s += `<rect x="266" y="289" width="7" height="7" fill="#fff"/><rect x="273" y="289" width="13" height="7" fill="#fff"/>`;
  s += text(267, 294.5, "22", "#333", 'font-size="5"') + text(274, 294.5, "00:08", "#333", 'font-size="5"');

  document.getElementById("chart").innerHTML = s;
</script>
</body>
</html>
